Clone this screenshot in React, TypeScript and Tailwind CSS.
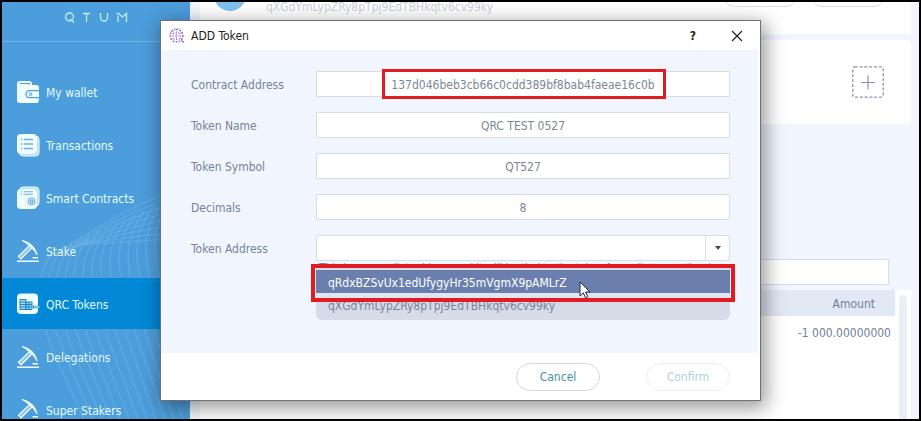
import { useState, type ReactNode } from "react";

function WalletIcon() {
  return (
    <svg viewBox="0 0 24 24" className="h-6 w-6 shrink-0" aria-hidden="true">
      <path d="M1 4a3 3 0 0 1 3-3h9a3 3 0 0 1 3 3v1h4a3 3 0 0 1 3 3v12a3 3 0 0 1-3 3H4a3 3 0 0 1-3-3z" fill="#effdff" />
      <path d="M4 3.500h9.500v1" fill="none" stroke="#4c9ddb" strokeWidth="1.200" />
      <path d="M23 10.700h-9.500a3.500 3.500 0 0 0 0 7H23" fill="none" stroke="#4c9ddb" strokeWidth="1.200" />
      <circle cx="14.500" cy="14.200" r="1.300" fill="none" stroke="#4c9ddb" />
    </svg>
  );
}

function ListIcon() {
  return (
    <svg viewBox="0 0 24 24" className="h-6 w-6 shrink-0" aria-hidden="true">
      <rect x="3.500" y="3" width="19.500" height="20" rx="3.500" fill="#b9def5" stroke="#effdff" />
      <rect x="1" y="1" width="20" height="20" rx="4" fill="#effdff" />
      <path d="M5 6.500h1.500M8 6.500h9M5 11h1.500M8 11h9M5 15.500h1.500M8 15.500h9" stroke="#6bb0e2" strokeWidth="1.400" />
    </svg>
  );
}

function ContractIcon() {
  return (
    <svg viewBox="0 0 24 24" className="h-6 w-6 shrink-0" aria-hidden="true">
      <rect x="3.500" y="1" width="19.500" height="19" rx="3.500" fill="#b9def5" stroke="#effdff" />
      <rect x="1" y="3" width="20" height="20" rx="4" fill="#effdff" />
      <path d="M5 5.800h1M7.500 5.800H17M5 8.200h1M7.500 8.200H17" stroke="#6bb0e2" strokeWidth="1.100" />
      <circle cx="15.500" cy="15.500" r="3.600" fill="#c9e5f6" stroke="#6bb0e2" />
      <circle cx="15.500" cy="15.500" r="1.500" fill="none" stroke="#4c9ddb" />
    </svg>
  );
}

function PickaxeIcon() {
  return (
    <svg viewBox="0 0 24 24" className="h-6 w-6 shrink-0" aria-hidden="true">
      <path d="M6.500 1.500C14 3.500 19 8 21 15.500C18.500 10.500 14 6 6.500 1.500z" fill="#effdff" stroke="#effdff" strokeWidth="1.200" strokeLinejoin="round" />
      <path d="M13.500 6.500l2.500 2.500L5 19.800l-2.500-2.500z" fill="#8fc7ec" stroke="#effdff" strokeWidth="1.200" />
      <path d="M1 22.300h22M16.500 18.800h5.500" stroke="#effdff" strokeWidth="1.400" />
    </svg>
  );
}

function TokenIcon() {
  return (
    <svg viewBox="0 0 24 24" className="h-6 w-6 shrink-0" aria-hidden="true">
      <rect x="1" y="1.500" width="21" height="20.500" rx="4" fill="#effdff" />
      <path d="M4 7.500h6v10H4zM10 10h6v7.500h-6zM4 10h6M4 12.500h12M4 15h12M13 10v7.500" fill="#a9daf2" stroke="#1f86c6" strokeWidth="1" />
      <path d="M17 15h6.500" stroke="#1f86c6" strokeWidth="2.500" />
      <path d="M18 15h5.500" stroke="#effdff" strokeWidth="1" />
    </svg>
  );
}

const menu: { label: string; icon: ReactNode }[] = [
  { label: "My wallet", icon: <WalletIcon /> },
  { label: "Transactions", icon: <ListIcon /> },
  { label: "Smart Contracts", icon: <ContractIcon /> },
  { label: "Stake", icon: <PickaxeIcon /> },
  { label: "QRC Tokens", icon: <TokenIcon /> },
  { label: "Delegations", icon: <PickaxeIcon /> },
  { label: "Super Stakers", icon: <PickaxeIcon /> },
];

const waveSteps = Array.from({ length: 17 }, (_, i) => i);

function Waves() {
  return (
    <svg viewBox="0 0 188 240" className="absolute bottom-0 left-0 h-[240px] w-[188px]" fill="none" stroke="#79b9e8" strokeOpacity="0.4" strokeWidth="1.500" aria-hidden="true">
      {waveSteps.map((i) => {
        const x = 52 + i * 9;
        const y = 72 - i * 4;
        return <path key={i} d={`M${x} ${y}C${x - 28} ${y + 40} ${x - 20} ${y + 60} ${x + 30} 240`} />;
      })}
      {waveSteps.slice(0, 8).map((i) => (
        <path key={i} d={`M${44 + i * 5} ${80 - i * 2}C90 ${50 + i * 2} 130 ${28 + i * 5} 188 ${3 + i * 8}`} />
      ))}
    </svg>
  );
}

function Sidebar() {
  return (
    <aside className="relative w-[188px] shrink-0 overflow-hidden bg-[#4c9ddb] text-[#e4fbff]">
      <Waves />
      <div className="relative flex h-10 justify-center border-b border-[#6fb2e4] pt-1">
        <svg viewBox="0 0 64 12" className="mt-1.5 h-3 w-16" fill="none" stroke="#bdf0f5" strokeWidth="1.300" role="img" aria-label="QTUM">
          <circle cx="5.500" cy="5" r="4" />
          <path d="M6 7l4 3.500M19 1.500h7M22.500 1.500V10M36.500 1v4.500a3.500 3.500 0 0 0 7 0V1M54 10V3.500M52.500 1.500h2l4 3.500 4-3.500V10" />
        </svg>
      </div>
      <nav className="relative mt-[23px]">
        {menu.map((item) => (
          <a
            key={item.label}
            href="#"
            className={
              item.label === "QRC Tokens"
                ? "flex h-[53px] items-center gap-1.5 border-y border-[#4c9ddb] bg-[#0288d6] pl-3.5"
                : "flex h-[53px] items-center gap-1.5 pl-3.5"
            }
          >
            {item.icon}
            <span className="pt-0.5">{item.label}</span>
          </a>
        ))}
      </nav>
    </aside>
  );
}

function Background() {
  return (
    <main className="flex min-w-0 flex-1 flex-col bg-[#f0f5fe] pl-2.5">
      <section className="mr-2 flex h-8 shrink-0 items-end gap-5 overflow-hidden rounded-b bg-white pb-[23px] pl-3.5">
        <span className="h-8 w-8 shrink-0 rounded-full bg-[#7ec2ee]" />
        <span className="-mb-1 flex-1 text-[#ccd0da]">qXGdYmLypZRy8pTpj9EdTBHkqtv6cv99ky</span>
        <div className="flex gap-2.5 pr-6">
          <button className="mb-1 h-7 w-[78px] rounded-full border border-[#dcdfe4]" aria-label="Send" />
          <button className="mb-1 h-7 w-[78px] rounded-full border border-[#dcdfe4]" aria-label="Receive" />
        </div>
      </section>
      <section className="mt-1.5 mr-2 flex h-[84px] shrink-0 items-center justify-end rounded bg-white pr-[27px]">
        <button aria-label="Add token">
          <svg viewBox="0 0 32 32" className="h-8 w-8" fill="none" stroke="#8a93a8">
            <rect x="0.800" y="0.800" width="30.400" height="30.400" rx="2" strokeWidth="1.300" strokeDasharray="3 1.800" />
            <path d="M9 16.500h14M16 9.500v14" strokeWidth="1.200" />
          </svg>
        </button>
      </section>
      <div className="mt-[135px] mr-[30px] flex shrink-0">
        <input aria-label="Search" className="h-[26px] w-full border border-[#d5dae6] bg-white px-2" />
      </div>
      <section className="mt-[5px] mr-2 flex min-h-0 flex-1 overflow-hidden bg-white">
        <table className="w-full self-start text-right text-[#72809c]">
          <thead>
            <tr className="h-[26px] bg-[#e2e8f4]">
              <th className="pt-0.5 pr-5 font-normal">Amount</th>
            </tr>
          </thead>
          <tbody>
            <tr className="h-8">
              <td className="pt-0.5 pr-1">-1 000.00000000</td>
            </tr>
          </tbody>
        </table>
        <div className="mt-[5px] mr-1 ml-1 w-2 shrink-0 rounded-t bg-[#eceef6]" />
      </section>
    </main>
  );
}

const fields = [
  { id: "name", label: "Token Name", value: "QRC TEST 0527" },
  { id: "symbol", label: "Token Symbol", value: "QT527" },
  { id: "decimals", label: "Decimals", value: "8" },
];

function QtumMark() {
  return (
    <svg viewBox="0 0 16 16" className="h-4 w-4" fill="none" stroke="#9a6bc0" aria-hidden="true">
      <circle cx="7.500" cy="7.500" r="6.500" strokeWidth="1.300" strokeDasharray="1.800 1.200" />
      <path d="M4 2.500v10M7.500 1v13M11 2.500v10M1.500 5h12M1 8h13M2 11h11" strokeDasharray="1.200 1.300" />
      <path d="M12.500 12.500l2.500 2" strokeWidth="1.400" />
    </svg>
  );
}

const inputClass = "h-[26px] w-full border border-[#d8dce5] bg-white pt-0.5 text-center text-[#7c8696] outline-none";

function AddTokenDialog() {
  const [contract, setContract] = useState("137d046beb3cb66c0cdd389bf8bab4faeae16c0b");
  return (
    <div
      role="dialog"
      aria-labelledby="dialog-title"
      className="relative w-[601px] border border-[#6e7275] bg-white shadow-[3px_5px_18px_2px_rgba(0,0,0,0.4)]"
    >
      <header className="flex h-[29px] items-center pr-[17px] pl-2 text-[#222]">
        <QtumMark />
        <h1 id="dialog-title" className="ml-1.5 flex-1">ADD Token</h1>
        <button aria-label="Help" className="w-5 font-bold">?</button>
        <button aria-label="Close" className="ml-7">
          <svg viewBox="0 0 12 12" className="h-3 w-3" stroke="#222" strokeWidth="1.200">
            <path d="M1 1l10 10M11 1L1 11" />
          </svg>
        </button>
      </header>
      <div className="mr-0.5 h-[303px] bg-[#f0f5fe] pt-[21px] pr-7 pl-[30px]">
        <div className="grid grid-cols-[125px_1fr] items-center gap-y-[15px] text-[#77849a]">
          <label htmlFor="contract" className="pt-0.5">Contract Address</label>
          <div className="relative flex">
            <input id="contract" className={inputClass} value={contract} onChange={(e) => setContract(e.target.value)} />
            <span className="pointer-events-none absolute -inset-y-0.5 left-[66px] w-[284px] border-[3px] border-[#e21b23]" />
          </div>
          {fields.map((f) => (
            <div key={f.id} className="col-span-2 grid grid-cols-subgrid items-center">
              <label htmlFor={f.id} className="pt-0.5">{f.label}</label>
              <input id={f.id} className={inputClass} defaultValue={f.value} />
            </div>
          ))}
          <label htmlFor="address" className="pt-0.5">Token Address</label>
          <div className="relative flex">
            <select id="address" className="h-[26px] w-full appearance-none border border-[#d8dce5] bg-white" />
            <span className="pointer-events-none absolute inset-y-0 right-0 flex w-[25px] items-center justify-center border-l border-[#d8dce5]">
              <span className="border-x-[3px] border-t-4 border-x-transparent border-t-[#444a55]" />
            </span>
            <p className="absolute top-[25px] left-0 h-3 overflow-hidden text-[11px] whitespace-nowrap">
              (This is your wallet address and it will be tied to the token for wallet operations)
            </p>
            <ul role="listbox" aria-label="Token addresses" className="absolute inset-x-0 top-[30px] h-[55px] overflow-hidden rounded-b-md bg-[#d5dce8] pt-[5px]">
              <li role="option" aria-selected="true" className="flex h-[23px] items-center bg-[#6b7fae] pt-0.5 pl-3 text-white">
                qRdxBZSvUx1edUfygyHr35mVgmX9pAMLrZ
              </li>
              <li role="option" aria-selected="false" className="flex h-[23px] items-center pt-0.5 pl-3">
                qXGdYmLypZRy8pTpj9EdTBHkqtv6cv99ky
              </li>
            </ul>
            <span className="pointer-events-none absolute -inset-x-[5px] top-[29px] flex h-[38px] flex-col justify-end border-4 border-[#e21b23]">
              <span className="mx-px h-[5px] bg-[#dfe5f1]" />
            </span>
            <svg viewBox="0 0 12 18" className="absolute top-[46px] left-[263px] h-[18px] w-3" aria-hidden="true">
              <path d="M1 1v14l3.300-3.200 2.200 5 2.300-1-2.200-4.800H11z" fill="#fff" stroke="#222a44" />
            </svg>
          </div>
        </div>
      </div>
      <footer className="flex h-[47px] items-center justify-end gap-[46px] pr-[30px] text-[#3f93a8]">
        <button className="h-7 w-[84px] rounded-full border border-[#d3d9df]">Cancel</button>
        <button disabled className="h-7 w-[84px] rounded-full border border-[#e9eef2] text-[#a9d3df]">Confirm</button>
      </footer>
    </div>
  );
}

export default function App() {
  return (
    <div className="relative h-screen min-h-[421px] overflow-hidden border-2 border-black text-xs leading-4 font-['DejaVu_Sans_Condensed','Noto_Sans',sans-serif]">
      <div className="flex h-full">
        <Sidebar />
        <Background />
      </div>
      <div className="absolute inset-0 flex items-center justify-center">
        <AddTokenDialog />
      </div>
    </div>
  );
}
